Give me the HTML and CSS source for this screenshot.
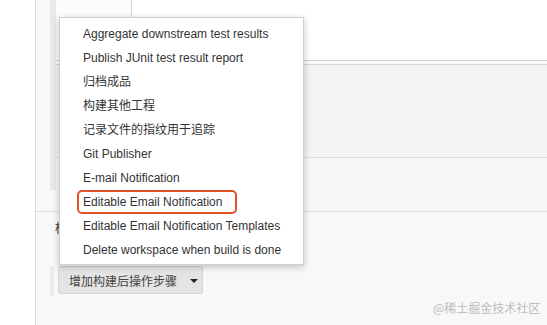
FILE: index.html
```html
<!DOCTYPE html>
<html>
<head>
<meta charset="utf-8">
<link rel="stylesheet" href="styles.css">
</head>
<body>
<div class="page">
  <div class="gutter"></div>
  <div class="main">
    <div class="upper">
      <div class="pad"></div>
      <div class="strip"></div>
      <div class="rows">
        <div class="row-top">
          <div class="cell"></div>
          <div class="cell-rest"></div>
        </div>
        <div class="double-line"></div>
        <div class="row-c"></div>
        <div class="row-d"></div>
      </div>
    </div>
    <div class="lower">
      <div class="heading">构建后操作</div>
      <div class="btn-wrap">
        <div class="btn-strip"></div>
        <button class="btn">增加构建后操作步骤<span class="caret"></span></button>
      </div>
    </div>
  </div>
</div>

<ul class="menu">
  <li>Aggregate downstream test results</li>
  <li>Publish JUnit test result report</li>
  <li>归档成品</li>
  <li>构建其他工程</li>
  <li>记录文件的指纹用于追踪</li>
  <li>Git Publisher</li>
  <li>E-mail Notification</li>
  <li class="marked">Editable Email Notification<span class="mark"></span></li>
  <li>Editable Email Notification Templates</li>
  <li>Delete workspace when build is done</li>
</ul>

<div class="watermark">@稀土掘金技术社区</div>
</body>
</html>
```

FILE: styles.css
```css
* { box-sizing: border-box; }
html, body {
  margin: 0;
  padding: 0;
}
body {
  width: 547px;
  height: 325px;
  overflow: hidden;
  position: relative;
  background: #fff;
  font-family: "Liberation Sans", Arial, "Noto Sans CJK SC", sans-serif;
  font-size: 12px;
  color: #333;
}
.page {
  display: flex;
  height: 325px;
}
.gutter {
  width: 36px;
  background: #fff;
  border-right: 1px solid #dcdcdc;
  flex: none;
}
.main {
  flex: 1;
  display: flex;
  flex-direction: column;
  background: #f8f8f8;
}
.upper {
  display: flex;
  height: 211px;
  flex: none;
}
.pad {
  width: 14px;
  background: #f8f8f8;
  flex: none;
}
.strip {
  width: 6px;
  height: 190px;
  background: #e9e9e9;
  flex: none;
}
.rows {
  flex: 1;
  display: flex;
  flex-direction: column;
}
.row-top {
  height: 60px;
  display: flex;
}
.cell {
  width: 75px;
  background: #fcfcfc;
  border-right: 1px solid #dadada;
  margin-left: 1px;
}
.cell-rest {
  flex: 1;
  background: #fff;
}
.double-line {
  height: 5px;
  border-top: 1px solid #d4d4d4;
  border-bottom: 1px solid #d4d4d4;
  background: #f9f9f9;
}
.row-c {
  height: 93px;
  background: #f3f3f3;
  border-bottom: 1px solid #dedede;
}
.row-d {
  flex: 1;
  background: #f6f6f6;
}
.lower {
  flex: 1;
  border-top: 1px solid #dedede;
  background: #f8f8f8;
  padding: 10px 0 0 19px;
}
.heading {
  height: 14px;
  line-height: 14px;
  color: #333;
}
.btn-wrap {
  display: flex;
  margin-top: 30px;
  margin-left: -5px;
}
.btn-strip {
  width: 4px;
  height: 30px;
  background: #ececec;
  margin-right: 4px;
}
.btn {
  width: 145px;
  height: 28px;
  background: #e4e4e4;
  border: 1px solid #d6d6d6;
  border-radius: 2px;
  font-family: "Liberation Sans", Arial, "Noto Sans CJK SC", sans-serif;
  font-size: 12px;
  color: #444;
  padding: 0 0 0 10px;
  display: flex;
  align-items: center;
  text-align: left;
}
.caret {
  display: inline-block;
  margin-left: 13px;
  width: 0;
  height: 0;
  border-left: 4px solid transparent;
  border-right: 4px solid transparent;
  border-top: 4px solid #222;
  margin-top: 1px;
}
.menu {
  position: absolute;
  left: 59px;
  top: 17px;
  width: 245px;
  height: 248px;
  margin: 0;
  padding: 4px 0;
  list-style: none;
  background: #fff;
  border: 1px solid #d0d0d0;
  box-shadow: 0 2px 7px rgba(0, 0, 0, 0.22);
}
.menu li {
  position: relative;
  height: 24px;
  line-height: 24px;
  padding-left: 23px;
  color: #333;
  white-space: nowrap;
}
.mark {
  position: absolute;
  left: 17px;
  top: 0;
  width: 160px;
  height: 24px;
  border: 2px solid #e0542a;
  border-radius: 5px;
}
.watermark {
  position: absolute;
  left: 433px;
  top: 301px;
  font-size: 12px;
  color: #bdbdbd;
  font-family: "Noto Sans CJK SC", sans-serif;
  line-height: 14px;
}
```
